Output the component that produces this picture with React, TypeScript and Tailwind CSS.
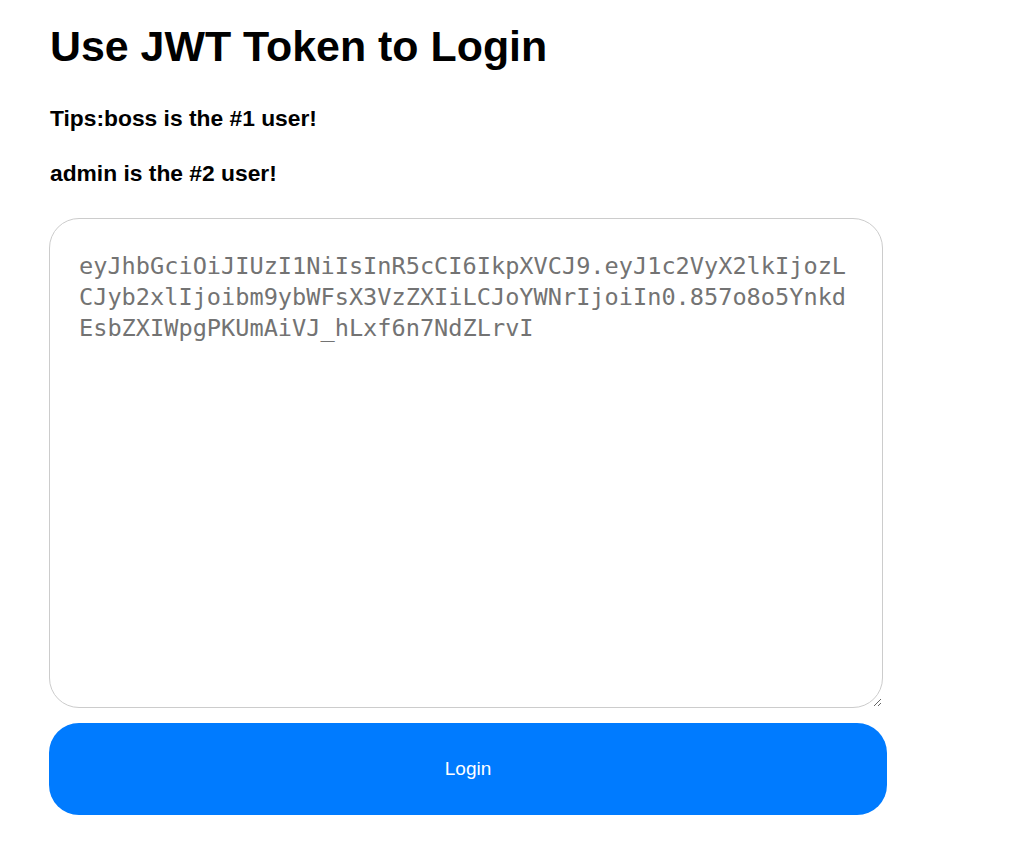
const token =
  "eyJhbGciOiJIUzI1NiIsInR5cCI6IkpXVCJ9.eyJ1c2VyX2lkIjozLCJyb2xlIjoibm9ybWFsX3VzZXIiLCJoYWNrIjoiIn0.857o8o5YnkdEsbZXIWpgPKUmAiVJ_hLxf6n7NdZLrvI";

export default function App() {
  return (
    <div className="min-h-[855px] bg-white pl-[49px] font-['Liberation_Sans',Arial,sans-serif] text-black">
      <h1 className="pt-[22px] pl-px text-[42.9px] leading-[48px] font-bold">
        Use JWT Token to Login
      </h1>
      <h3 className="mt-[35px] pl-px text-[22.8px] leading-[26px] font-bold">
        Tips:boss is the #1 user!
      </h3>
      <h3 className="mt-[29px] pl-px text-[22.8px] leading-[26px] font-bold">
        admin is the #2 user!
      </h3>
      <div className="mt-[32px] flex flex-col gap-[15px]">
        <textarea
          defaultValue={token}
          spellCheck={false}
          className="block h-[490px] w-[834px] rounded-[30px] border border-[#cccccc] px-[29px] pt-[32px] font-['DejaVu_Sans_Mono',Consolas,monospace] text-[23.6px] leading-[31px] text-[#737373] outline-none"
        />
        <button className="h-[92px] w-[838px] rounded-[30px] bg-[#007bff] text-[19px] text-white">
          Login
        </button>
      </div>
    </div>
  );
}
